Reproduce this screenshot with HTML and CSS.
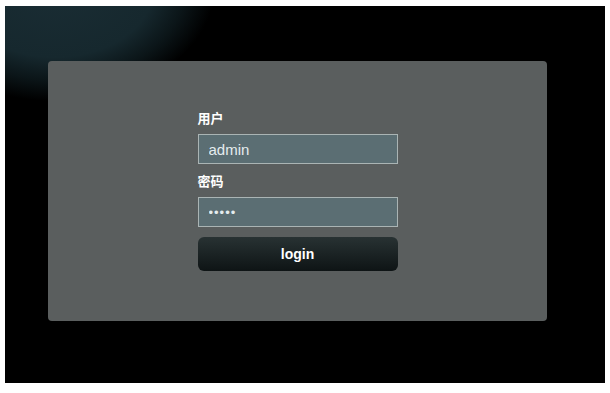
FILE: index.html
```html
<!DOCTYPE html>
<html>
	<head>
		<title>login</title>
		<link rel="stylesheet" href="styles.css">
	</head>
	<body>
		<div class="stage">
			<div class="panel">
				<form class="login">
					<label for="user">用户</label>
					<input id="user" type="text" value="admin">
					<label for="pass">密码</label>
					<input id="pass" type="password" value="admin">
					<button type="button">login</button>
				</form>
			</div>
		</div>
	</body>
</html>
```

FILE: styles.css
```css
html, body{
	margin: 0;
	background-color: #fff;
}
body{
	padding: 6px 5px 10px 5px;
	font-family: "Liberation Sans", "Noto Sans CJK SC", sans-serif;
}
.stage{
	height: 377px;
	background-color: #000;
	background-image: radial-gradient(ellipse 160px 115px at 50px -20px, #1a2d34 0%, #16282e 62%, #0b1518 82%, #000 100%);
	overflow: hidden;
}
.panel{
	margin: 55px 58px 0 43px;
	height: 260px;
	background-color: #5a5e5e;
	border-radius: 4px;
	display: flex;
	justify-content: center;
}
.login{
	width: 200px;
	padding-top: 48px;
	display: flex;
	flex-direction: column;
}
.login label{
	display: block;
	height: 17px;
	line-height: 17px;
	font-size: 13px;
	font-weight: bold;
	color: #fff;
	font-family: "Noto Sans CJK SC", sans-serif;
	margin-bottom: 8px;
}
.login input{
	box-sizing: border-box;
	width: 200px;
	height: 30px;
	margin: 0 0 8px 0;
	padding: 0 10px;
	background-color: #5b6e73;
	border: 1px solid #aab4b4;
	color: #e4ecee;
	font-size: 15px;
	font-family: "Liberation Sans", sans-serif;
	outline: none;
}
.login input[type=password]{
	letter-spacing: 1px;
	font-size: 13px;
}
.login button{
	margin-top: 2px;
	height: 34px;
	border: none;
	border-radius: 6px;
	background: linear-gradient(#283233, #0e1415);
	color: #fff;
	font-size: 14px;
	font-weight: bold;
	font-family: "Liberation Sans", sans-serif;
	cursor: pointer;
}
```
